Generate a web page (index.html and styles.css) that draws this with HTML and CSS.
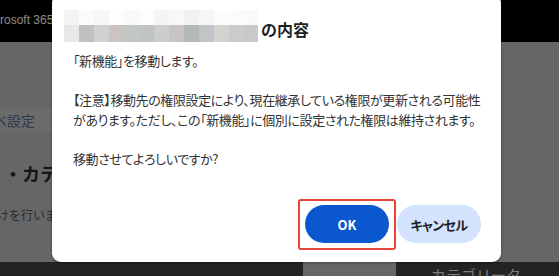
FILE: index.html
```html
<!DOCTYPE html>
<html lang="ja">

<head>
    <meta charset="UTF-8">
    <meta name="viewport" content="width=device-width, initial-scale=1.0">
    <title>移動の確認</title>
    <link rel="stylesheet" href="styles.css">
</head>

<body>
    <div id="page">
        <div id="topBar">rosoft 365</div>

        <div id="pageMain">
            <div class="crumbs">
                <span class="crumb">ベ設定</span>
                <span class="crumb-sep">/</span>
            </div>
            <div class="page-heading">・カテ</div>
            <div class="page-desc">けを行いまで</div>
        </div>

        <div id="bottomBar">
            <span class="bar-block"></span>
            <span class="bar-text">カテゴリータ</span>
        </div>
    </div>

    <div class="dialog">
        <div class="dialog-title">
            <span class="mosaic"></span>
            <span class="title-text">の内容</span>
        </div>

        <div class="dialog-body">
            <p>「新機能」を移動します。</p>
            <p>【注意】移動先の権限設定により、現在継承している権限が更新される可能性<br>があります。ただし、この「新機能」に個別に設定された権限は維持されます。</p>
            <p>移動させてよろしいですか?</p>
        </div>

        <div class="dialog-actions">
            <button class="btn btn-ok">OK<span class="mark"></span></button>
            <button class="btn btn-cancel">キャンセル</button>
        </div>
    </div>
</body>

</html>
```

FILE: styles.css
```css
/* page behind the dimmed overlay */
body {
    margin: 0;
    padding: 0;
    width: 559px;
    height: 276px;
    overflow: hidden;
    position: relative;
    font-family: "Noto Sans CJK JP", "Noto Sans", sans-serif;
    background-color: #666;
}

#page {
    display: flex;
    flex-direction: column;
    height: 100%;
}

#topBar {
    height: 42px;
    background-color: #000;
    color: #8f8f86;
    font-family: "Liberation Sans", Arial, sans-serif;
    font-size: 12px;
    line-height: 40px;
    flex-shrink: 0;
}

#pageMain {
    flex: 1;
    background-color: #666;
}

.crumbs {
    display: flex;
    align-items: center;
    margin-top: 66px;
    height: 25px;
}

.crumb {
    background-color: #6b6b6b;
    color: #2c3947;
    font-size: 14px;
    line-height: 25px;
    padding: 0 17px 0 0;
    margin-left: -7px;
}

.crumb-sep {
    color: #3a3a3a;
    font-size: 13px;
    margin-left: 4px;
}

.page-heading {
    margin-top: 28px;
    font-size: 18px;
    font-weight: bold;
    line-height: 24px;
    color: #141414;
    padding-left: 4px;
}

.page-desc {
    margin-top: 21px;
    font-size: 12px;
    line-height: 18px;
    color: #2a2a2a;
    margin-left: -3px;
}

#bottomBar {
    height: 14px;
    background-color: #232323;
    display: flex;
    flex-shrink: 0;
    overflow: hidden;
}

.bar-block {
    width: 93px;
    margin-left: 303px;
    background-color: #666;
}

.bar-text {
    margin-left: 35px;
    color: #7c7c7c;
    font-size: 15px;
    line-height: 26px;
}

/* dialog */
.dialog {
    position: absolute;
    left: 52px;
    top: -6px;
    width: 449px;
    height: 268px;
    box-sizing: border-box;
    padding: 16px 20px 19px 21px;
    background-color: #fff;
    border-radius: 9px;
    box-shadow: 0 1px 3px rgba(0, 0, 0, 0.35);
    display: flex;
    flex-direction: column;
}

.dialog-title {
    display: flex;
    align-items: flex-end;
    height: 32px;
    margin-left: -9px;
}

.mosaic {
    display: block;
    width: 194px;
    height: 32px;
    background:
        linear-gradient(to right,
            #f3f3f3 0 15px, #fbfbfb 15px 30px, #f7f7f7 30px 45px, #fefefe 45px 60px,
            #f9f9f9 60px 75px, #fdfdfd 75px 90px, #f5f5f5 90px 105px, #f8f8f8 105px 120px,
            #f1f1f1 120px 135px, #f6f6f6 135px 150px, #fcfcfc 150px 165px, #fbfbfb 165px 180px,
            #fafafa 180px 194px) top / 100% 15px no-repeat,
        linear-gradient(to right,
            #e8e8e8 0 15px, #c1c1c1 15px 30px, #d0d1d2 30px 45px, #cbc5c2 45px 60px,
            #c2c6c7 60px 75px, #c0c4c4 75px 90px, #cdcdcd 90px 105px, #c9c4c1 105px 120px,
            #b4b8b6 120px 135px, #c2c4c8 135px 150px, #d5d1cd 150px 165px, #cbcbcb 165px 180px,
            #c9c9c9 180px 194px) bottom / 100% 17px no-repeat;
}

.title-text {
    margin-left: 3px;
    font-size: 16px;
    font-weight: bold;
    color: #1f1f1f;
    line-height: 22px;
    margin-bottom: 2px;
}

.dialog-body {
    margin-top: 9px;
    font-size: 13px;
    line-height: 19.5px;
    color: #333;
    font-feature-settings: "palt";
    letter-spacing: -0.4px;
}

.dialog-body p {
    margin: 0 0 19.5px 0;
    white-space: nowrap;
}

.dialog-actions {
    margin-top: auto;
    display: flex;
    justify-content: flex-end;
    gap: 8px;
}

.btn {
    width: 84px;
    height: 38px;
    border: none;
    border-radius: 19px;
    font-family: "Noto Sans CJK JP", "Noto Sans", sans-serif;
    font-size: 13px;
    font-weight: bold;
    cursor: pointer;
    position: relative;
    padding: 0;
}

.btn-ok {
    background-color: #0b57d0;
    color: #fff;
}

.btn-cancel {
    background-color: #d3e3fd;
    color: #1c1c2c;
    font-feature-settings: "palt";
    letter-spacing: -0.6px;
}

/* red annotation frame around OK */
.mark {
    position: absolute;
    left: -7px;
    top: -6px;
    right: -7px;
    bottom: -7px;
    border: 2.5px solid #e8443a;
    border-radius: 3px;
}
```
